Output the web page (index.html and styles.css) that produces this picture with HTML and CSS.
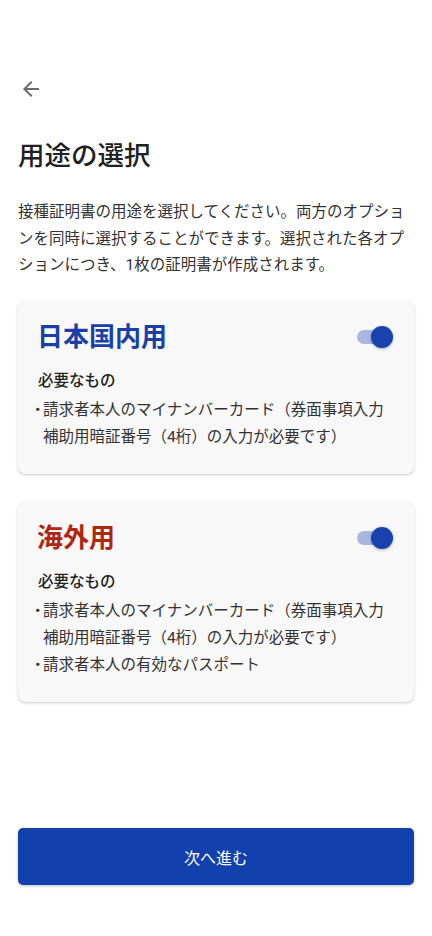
FILE: index.html
```html
<!DOCTYPE html>
<html lang="ja">
<head>
    <meta charset="UTF-8">
    <meta name="viewport" content="width=device-width, initial-scale=1.0">
    <title>用途の選択</title>
    <link rel="stylesheet" href="styles.css">
</head>
<body>
    <div class="page">
        <div class="topbar">
            <a href="#" class="back" aria-label="戻る">
                <svg width="24" height="24" viewBox="0 0 24 24"><path d="M20 11H7.83l5.59-5.59L12 4l-8 8 8 8 1.41-1.41L7.83 13H20v-2z" fill="#6b6b6b"/></svg>
            </a>
        </div>

        <h1>用途の選択</h1>
        <p class="lead">接種証明書の用途を選択してください。両方のオプションを同時に選択することができます。選択された各オプションにつき、1枚の証明書が作成されます。</p>

        <div class="card">
            <div class="card-head">
                <h2 class="domestic">日本国内用</h2>
                <span class="switch on"><span class="thumb"></span></span>
            </div>
            <div class="need">必要なもの</div>
            <ul class="items">
                <li>請求者本人のマイナンバーカード（券面事項入力補助用暗証番号（4桁）の入力が必要です）</li>
            </ul>
        </div>

        <div class="card">
            <div class="card-head">
                <h2 class="overseas">海外用</h2>
                <span class="switch on"><span class="thumb"></span></span>
            </div>
            <div class="need">必要なもの</div>
            <ul class="items">
                <li>請求者本人のマイナンバーカード（券面事項入力補助用暗証番号（4桁）の入力が必要です）</li>
                <li>請求者本人の有効なパスポート</li>
            </ul>
        </div>

        <button class="next">次へ進む</button>
    </div>
</body>
</html>
```

FILE: styles.css
```css
body {
    margin: 0;
    background-color: #fff;
    font-family: Roboto, "Noto Sans CJK JP", sans-serif;
    color: #222;
}
.page {
    min-height: 100vh;
    box-sizing: border-box;
    padding: 77px 18px 51px;
    display: flex;
    flex-direction: column;
}
.topbar {
    height: 24px;
}
.back {
    display: inline-block;
    width: 24px;
    height: 24px;
    margin-left: 1px;
}
h1 {
    margin: 37px 0 0;
    font-size: 26.5px;
    line-height: 36px;
    font-weight: 500;
    color: #212121;
}
.lead {
    margin: 25px 0 0;
    font-size: 15.5px;
    line-height: 26.5px;
    color: #333;
}
.card {
    margin-top: 22px;
    padding: 18px 20px 23px;
    background-color: #f8f8f8;
    border-radius: 8px;
    box-shadow: 0 1px 3px rgba(0,0,0,0.22);
}
.card + .card {
    margin-top: 28px;
}
.card-head {
    display: flex;
    align-items: center;
    justify-content: space-between;
}
h2 {
    margin: 0 0 0 -1px;
    font-size: 26px;
    line-height: 36px;
    font-weight: 700;
}
.domestic {
    color: #1a40a8;
}
.overseas {
    color: #b0260e;
}
.switch {
    position: relative;
    width: 36px;
    height: 14px;
    border-radius: 7px;
    background-color: #a9b7df;
    margin-right: 1px;
}
.switch .thumb {
    position: absolute;
    right: 0;
    top: -4px;
    width: 22px;
    height: 22px;
    border-radius: 50%;
    background-color: #1842ad;
    box-shadow: 0 1px 3px rgba(0,0,0,0.3);
}
.need {
    margin-top: 13px;
    font-size: 15.5px;
    line-height: 27px;
    font-weight: 500;
    color: #222;
}
.items {
    list-style: none;
    margin: 2px 0 0;
    padding: 0;
    font-size: 15.5px;
    line-height: 27px;
    color: #333;
}
.items li {
    position: relative;
    padding-left: 5px;
}
.items li::before {
    content: "・";
    position: absolute;
    left: -4px;
    top: 0;
    width: 9px;
    overflow: hidden;
    text-indent: -4px;
}
.next {
    margin-top: auto;
    height: 57px;
    border: none;
    border-radius: 5px;
    background-color: #1241ad;
    color: #fff;
    font-family: Roboto, "Noto Sans CJK JP", sans-serif;
    font-size: 16px;
    box-shadow: 0 1px 3px rgba(0,0,0,0.25);
}
```
